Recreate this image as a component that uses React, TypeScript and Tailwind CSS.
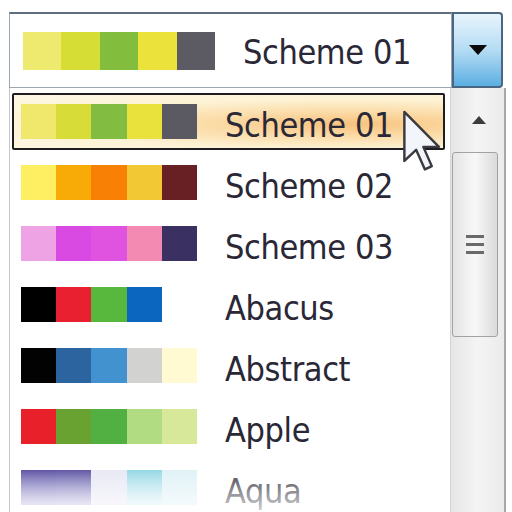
import React from 'react';

type Scheme = {
  name: string;
  colors: string[];
};

const schemes: Scheme[] = [
  { name: 'Scheme 01', colors: ['bg-[#efe86c]', 'bg-[#d7dc38]', 'bg-[#82bc40]', 'bg-[#e9e13c]', 'bg-[#5b5a62]'] },
  { name: 'Scheme 02', colors: ['bg-[#fdee62]', 'bg-[#f8aa06]', 'bg-[#f88004]', 'bg-[#f2c834]', 'bg-[#682024]'] },
  { name: 'Scheme 03', colors: ['bg-[#eea4e4]', 'bg-[#d84ae2]', 'bg-[#e052e0]', 'bg-[#f28ab2]', 'bg-[#3a3062]'] },
  { name: 'Abacus', colors: ['bg-[#000000]', 'bg-[#e82030]', 'bg-[#58b83e]', 'bg-[#0a66be]'] },
  { name: 'Abstract', colors: ['bg-[#020202]', 'bg-[#2c64a0]', 'bg-[#4292d0]', 'bg-[#d2d2d0]', 'bg-[#fffad2]'] },
  { name: 'Apple', colors: ['bg-[#e8202a]', 'bg-[#6aa232]', 'bg-[#52b042]', 'bg-[#b2dc82]', 'bg-[#d8e89a]'] },
  {
    name: 'Aqua',
    colors: [
      'bg-gradient-to-b from-[#4a3c98] to-[#b4aede]',
      'bg-gradient-to-b from-[#4c4098] to-[#b8b2de]',
      'bg-[#e6e6f4]',
      'bg-gradient-to-b from-[#84d2e2] to-[#d4eef4]',
      'bg-[#dcf0f6]',
    ],
  },
];

const font = 'font-["DejaVu_Sans_Condensed","DejaVu_Sans",sans-serif]';

function Cursor() {
  return (
    <svg
      className="absolute left-[400px] top-[110px]"
      width="44"
      height="62"
      viewBox="0 0 12 19"
    >
      <path
        d="M0.6 0.6 L0.6 15.6 L4.2 12.2 L6.9 18.2 L9 17.2 L6.4 11.3 L11.2 11.3 Z"
        fill="#f2f6fa"
        stroke="#3a3a40"
        strokeWidth="0.75"
        strokeLinejoin="round"
      />
    </svg>
  );
}

function SchemeRow({ scheme, selected }: { scheme: Scheme; selected?: boolean }) {
  return (
    <div className="h-[61px] pt-[1px]">
      <div
        className={
          selected
            ? 'ml-[2px] flex h-[57px] w-[433px] items-center rounded-[2px] border-2 border-[#1e1e22] bg-[radial-gradient(ellipse_at_78%_55%,#f8c27e_0%,#fbdca8_30%,#fdf2d4_60%,#fdf8e6_100%)] pl-[7px]'
            : 'ml-[2px] flex h-[57px] w-[433px] items-center border-2 border-transparent pl-[7px]'
        }
      >
        <div className="flex h-[35px] w-[176px]">
          {scheme.colors.map((c, i) => (
            <div key={i} className={`h-full w-[35.2px] ${c}`} />
          ))}
        </div>
        <span className={`ml-[28px] mt-[7px] text-[34px] leading-none tracking-[-0.4px] text-[#2a2836] ${font}`}>
          {scheme.name}
        </span>
      </div>
    </div>
  );
}

export default function App() {
  return (
    <div className="relative h-[512px] w-[512px] overflow-hidden bg-white pl-[9px] pt-[12px]">
      {/* combo box */}
      <div className="flex h-[76px] w-[494px]">
        <div className="flex flex-1 items-center border border-t-2 border-[#9aa6b2] border-t-[#5e6e7e] bg-white pl-[13px]">
          <div className="flex h-[38px] w-[192px]">
            <div className="h-full flex-1 bg-[#eeea70]" />
            <div className="h-full flex-1 bg-[#d6dd34]" />
            <div className="h-full flex-1 bg-[#82bd3e]" />
            <div className="h-full flex-1 bg-[#ebe23b]" />
            <div className="h-full flex-1 bg-[#5c5b63]" />
          </div>
          <span className={`ml-[28px] mt-[3px] text-[34px] leading-none tracking-[-0.4px] text-[#2a2836] ${font}`}>
            Scheme 01
          </span>
        </div>
        <div className="flex w-[51px] items-center justify-center rounded-r-[4px] border-2 border-[#4a6680] bg-gradient-to-b from-[#e8f4fc] via-[#b4dcf4] to-[#5aaee2]">
          <svg width="18" height="10" viewBox="0 0 18 10">
            <path d="M0 0 L18 0 L9 10 Z" fill="#0a0a0a" />
          </svg>
        </div>
      </div>

      {/* drop list */}
      <div className="flex h-[424px]">
        <div className="w-[441px] border-l border-[#c6c6c6] pt-[4px]">
          {schemes.map((s, i) => (
            <SchemeRow key={s.name} scheme={s} selected={i === 0} />
          ))}
        </div>
        <div className="flex w-[56px] flex-col border-l border-r-2 border-[#d4d4d4] border-r-[#a8a8a8] bg-gradient-to-r from-[#e6e6e6] via-[#f4f4f4] to-[#ebebeb] pt-[2px]">
          <div className="flex h-[60px] items-center justify-center pl-[2px]">
            <svg width="14" height="8" viewBox="0 0 14 8">
              <path d="M0 8 L7 0 L14 8 Z" fill="#3c3c3c" />
            </svg>
          </div>
          <div className="ml-[1px] mt-[2px] flex h-[185px] w-[46px] items-center justify-center rounded-[3px] border border-[#a2a2a2] bg-gradient-to-r from-[#e4e4e4] via-[#f8f8f8] to-[#dadada]">
            <div className="flex flex-col gap-[5px]">
              <div className="h-[3px] w-[18px] bg-[#6a6a6a]" />
              <div className="h-[3px] w-[18px] bg-[#6a6a6a]" />
              <div className="h-[3px] w-[18px] bg-[#6a6a6a]" />
            </div>
          </div>
        </div>
      </div>

      {/* fade at the bottom edge */}
      <div className="pointer-events-none absolute bottom-0 left-[10px] h-[50px] w-[440px] bg-gradient-to-b from-white/0 via-white/40 to-white/80" />

      <Cursor />
    </div>
  );
}
